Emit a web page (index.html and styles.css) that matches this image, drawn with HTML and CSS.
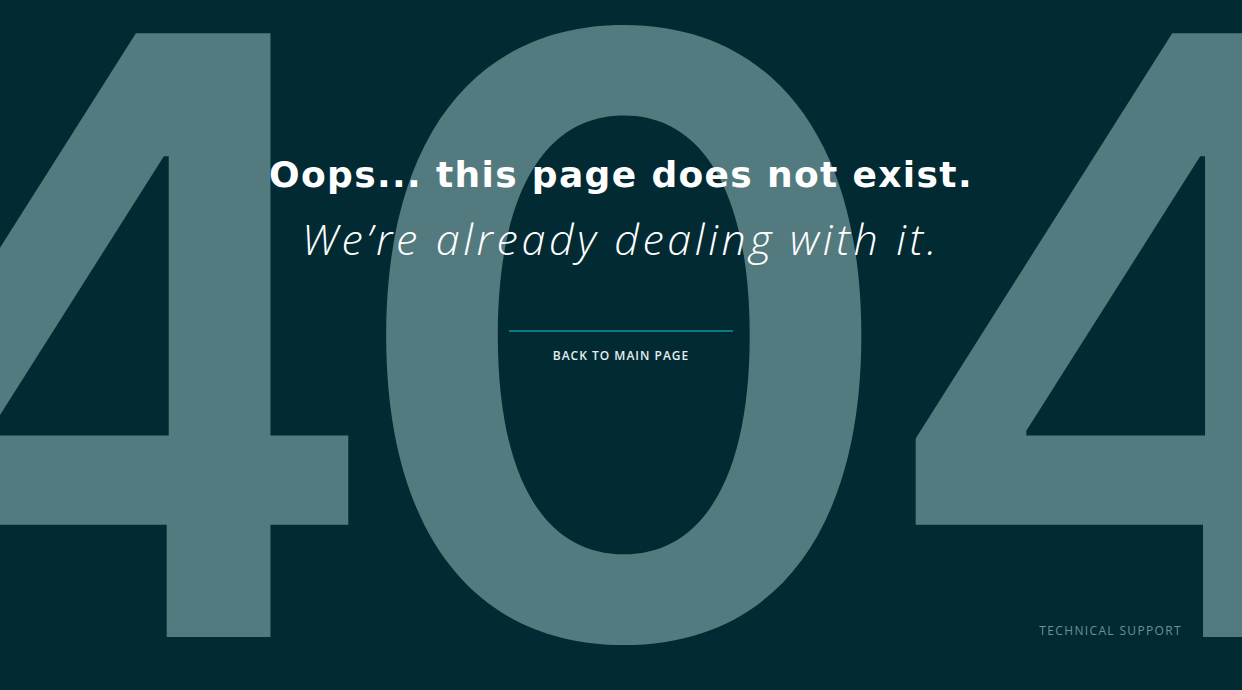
FILE: index.html
```html
<!DOCTYPE html>
<html lang="en">
<head>
<meta charset="utf-8">
<title>404</title>
<link rel="stylesheet" href="styles.css">
</head>
<body>
<div class="page">
  <div class="bg-code" aria-hidden="true"><span class="digit digit-first">4</span><span class="digit digit-zero">0</span><span class="digit digit-last">4</span></div>
  <main class="content">
    <h1 class="title">Oops... this page does not exist.</h1>
    <p class="subtitle">We’re already dealing with it.</p>
    <a class="back" href="#">BACK TO MAIN PAGE</a>
  </main>
  <footer class="footer">
    <a class="support" href="#">TECHNICAL SUPPORT</a>
  </footer>
</div>
</body>
</html>
```

FILE: styles.css
```css
html, body {
  margin: 0;
  padding: 0;
  background: #022a33;
}
.page {
  position: relative;
  width: 1242px;
  height: 690px;
  overflow: hidden;
  background: #022a33;
  font-family: "Open Sans", "Lato", sans-serif;
  color: #ffffff;
  display: flex;
  flex-direction: column;
}
.bg-code {
  position: absolute;
  left: -164px;
  top: -80px;
  display: flex;
  font-family: "Inter", sans-serif;
  font-weight: 600;
  font-size: 830px;
  line-height: 1;
  color: #537b7f;
  white-space: nowrap;
}
.digit {
  display: block;
}
.digit-first {
  margin-right: -39px;
}
.digit-zero {
  transform: scaleX(1.024);
  margin-right: -25px;
}
.content {
  position: relative;
  flex: 1;
  display: flex;
  flex-direction: column;
  align-items: center;
  padding-top: 150px;
}
.title {
  margin: 0;
  font-family: "DejaVu Sans", "Open Sans", sans-serif;
  font-size: 36px;
  font-weight: 700;
  line-height: 50px;
  letter-spacing: 1.35px;
}
.subtitle {
  margin: 14px 0 0;
  font-size: 43px;
  font-style: italic;
  font-weight: 300;
  line-height: 50px;
  letter-spacing: 3.65px;
}
.back {
  margin-top: 66px;
  width: 224px;
  border-top: 2px solid #0b7782;
  padding-top: 16px;
  text-align: center;
  color: #e6ecee;
  text-decoration: none;
  font-size: 12px;
  line-height: 16px;
  font-weight: 600;
  letter-spacing: 1px;
}
.footer {
  position: relative;
  display: flex;
  justify-content: flex-end;
  padding: 0 60px 51px 0;
}
.support {
  color: #6d9196;
  text-decoration: none;
  font-size: 12px;
  line-height: 16px;
  letter-spacing: 1.35px;
}
```
